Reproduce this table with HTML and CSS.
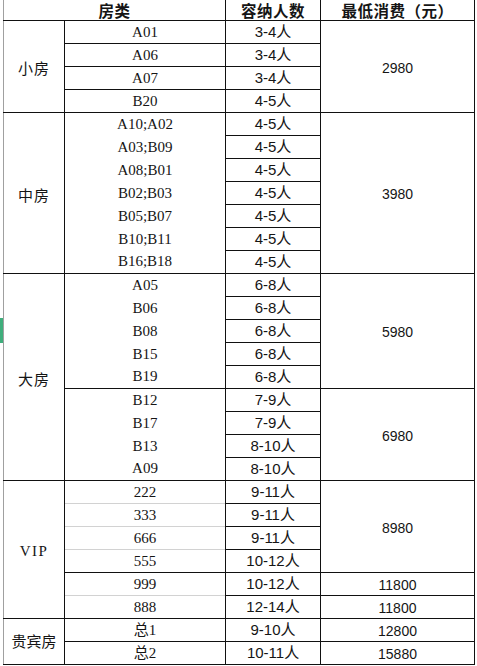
FILE: index.html
```html
<!DOCTYPE html>
<html lang="zh">
<head>
<meta charset="utf-8">
<title>房类价格表</title>
<link rel="stylesheet" href="styles.css">
</head>
<body>
<div class="sheet">
  <span class="sel-mark"></span>
  <table class="price">
    <colgroup>
      <col class="c-type">
      <col class="c-room">
      <col class="c-cap">
      <col class="c-price">
    </colgroup>
    <thead>
      <tr class="head">
        <th colspan="2" class="h-left">房类</th>
        <th>容纳人数</th>
        <th>最低消费（元）</th>
      </tr>
    </thead>
    <tbody>
      <tr><td rowspan="4" class="type">小房</td><td class="room">A01</td><td class="cap">3-4人</td><td rowspan="4" class="amt">2980</td></tr>
      <tr><td class="room bt">A06</td><td class="cap">3-4人</td></tr>
      <tr><td class="room bt">A07</td><td class="cap">3-4人</td></tr>
      <tr><td class="room bt">B20</td><td class="cap">4-5人</td></tr>

      <tr><td rowspan="7" class="type">中房</td><td class="room bt">A10;A02</td><td class="cap">4-5人</td><td rowspan="7" class="amt">3980</td></tr>
      <tr><td class="room">A03;B09</td><td class="cap">4-5人</td></tr>
      <tr><td class="room">A08;B01</td><td class="cap">4-5人</td></tr>
      <tr><td class="room">B02;B03</td><td class="cap">4-5人</td></tr>
      <tr><td class="room">B05;B07</td><td class="cap">4-5人</td></tr>
      <tr><td class="room">B10;B11</td><td class="cap">4-5人</td></tr>
      <tr><td class="room">B16;B18</td><td class="cap">4-5人</td></tr>

      <tr><td rowspan="9" class="type">大房</td><td class="room bt">A05</td><td class="cap">6-8人</td><td rowspan="5" class="amt">5980</td></tr>
      <tr><td class="room">B06</td><td class="cap">6-8人</td></tr>
      <tr><td class="room">B08</td><td class="cap">6-8人</td></tr>
      <tr><td class="room">B15</td><td class="cap">6-8人</td></tr>
      <tr><td class="room">B19</td><td class="cap">6-8人</td></tr>
      <tr><td class="room bt">B12</td><td class="cap">7-9人</td><td rowspan="4" class="amt">6980</td></tr>
      <tr><td class="room">B17</td><td class="cap">7-9人</td></tr>
      <tr><td class="room">B13</td><td class="cap">8-10人</td></tr>
      <tr><td class="room">A09</td><td class="cap">8-10人</td></tr>

      <tr><td rowspan="6" class="type vip">VIP</td><td class="room bt">222</td><td class="cap">9-11人</td><td rowspan="4" class="amt">8980</td></tr>
      <tr><td class="room gt">333</td><td class="cap">9-11人</td></tr>
      <tr><td class="room gt">666</td><td class="cap">9-11人</td></tr>
      <tr><td class="room gt">555</td><td class="cap">10-12人</td></tr>
      <tr><td class="room bt">999</td><td class="cap">10-12人</td><td class="amt">11800</td></tr>
      <tr><td class="room gt">888</td><td class="cap">12-14人</td><td class="amt">11800</td></tr>

      <tr><td rowspan="2" class="type wide">贵宾房</td><td class="room bt">总1</td><td class="cap">9-10人</td><td class="amt">12800</td></tr>
      <tr class="last"><td class="room bt">总2</td><td class="cap">10-11人</td><td class="amt">15880</td></tr>
    </tbody>
  </table>
</div>
</body>
</html>
```

FILE: styles.css
```css
html, body {
  margin: 0;
  padding: 0;
  background: #ffffff;
}

.sheet {
  position: relative;
  width: 477px;
  height: 666px;
  overflow: hidden;
  padding-left: 3px;
  box-sizing: border-box;
}

.sel-mark {
  position: absolute;
  left: 0;
  top: 318px;
  width: 3px;
  height: 25px;
  background: #3fae7c;
}

.price {
  border-collapse: collapse;
  table-layout: fixed;
  width: 471px;
  color: #151515;
}

.c-type { width: 61px; }
.c-room { width: 161px; }
.c-cap { width: 95px; }
.c-price { width: 154px; }

.price th,
.price td {
  padding: 0;
  text-align: center;
  vertical-align: middle;
  white-space: nowrap;
}

.head {
  height: 20px;
}

.head th {
  font-family: "Noto Sans CJK SC", sans-serif;
  font-weight: 700;
  font-size: 15.5px;
  line-height: 18px;
  letter-spacing: 0.5px;
  border-top: none;
  border-left: 1px solid #111;
  border-right: 1px solid #111;
  border-bottom: 1px solid #111;
}

.head th.h-left {
  border-left: 1px solid #a0a0a0;
}

tbody tr {
  height: 23px;
}

.type {
  font-family: "Noto Sans CJK SC", sans-serif;
  font-size: 15px;
  line-height: 18px;
  letter-spacing: 1px;
  padding-top: 4px !important;
  border-top: 1px solid #111;
  border-bottom: 1px solid #111;
  border-right: 1px solid #111;
  border-left: 1px solid #a0a0a0;
}

.type.vip {
  font-family: "Liberation Serif", "Noto Sans CJK SC", serif;
  font-size: 15px;
  letter-spacing: 1.5px;
}

.type.wide {
  letter-spacing: 0;
  padding-top: 0 !important;
}

.room {
  font-family: "Liberation Serif", "Noto Sans CJK SC", serif;
  font-size: 15px;
  line-height: 18px;
  border-left: 1px solid #111;
  border-right: 1px solid #111;
  border-top: none;
  border-bottom: none;
}

.room.bt {
  border-top: 1px solid #111;
}

.room.gt {
  border-top: 1px solid #d2d2d2;
}

.last .room {
  border-bottom: 1px solid #111;
}

.cap {
  font-family: "Liberation Sans", "Noto Sans CJK SC", sans-serif;
  font-size: 15px;
  line-height: 18px;
  border: 1px solid #111;
}

.amt {
  font-family: "Liberation Sans", sans-serif;
  font-size: 14px;
  line-height: 18px;
  padding-top: 3px !important;
  border: 1px solid #111;
}
```
